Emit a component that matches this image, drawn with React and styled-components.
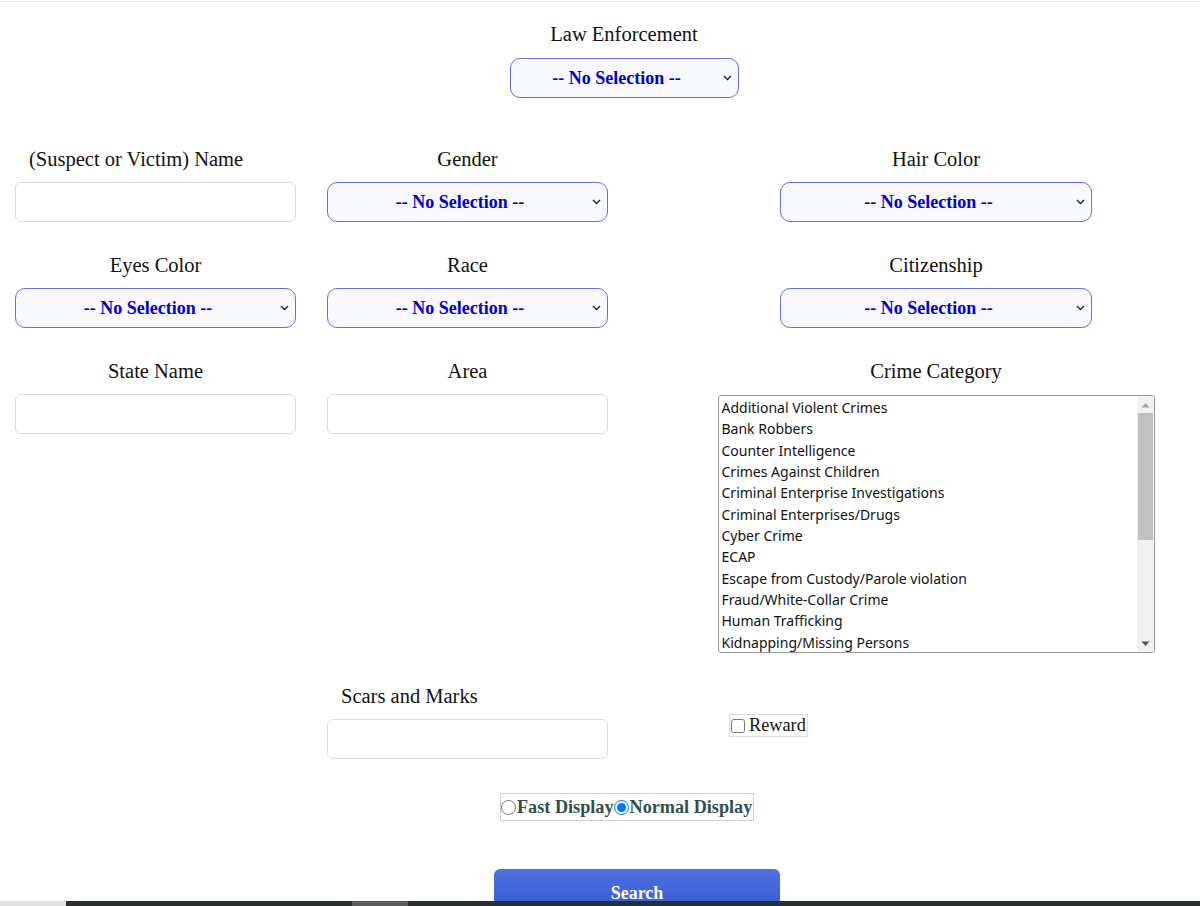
import React from "react";
import styled, { createGlobalStyle } from "styled-components";

const Global = createGlobalStyle`
  html, body { margin: 0; padding: 0; background: #fff; overflow: hidden; }
  body { font-family: "Liberation Serif", "Times New Roman", serif; }
`;

const Page = styled.div`
  margin-top: 1px;
  border-top: 1px solid #e8e8e8;
  width: 1200px;
  display: flex;
  flex-direction: column;
  & > * { flex-shrink: 0; }
`;

const Header = styled.div`
  display: flex;
  flex-direction: column;
  align-items: center;
  padding-left: 48px;
  padding-top: 21px;
`;

const Label = styled.div`
  font-size: 20.5px;
  line-height: 23px;
  color: #111;
  text-align: ${(p) => (p.$pl ? "left" : "center")};
  padding-left: ${(p) => p.$pl || "0"};
  margin-bottom: ${(p) => p.$mb || "11px"};
  white-space: nowrap;
`;

const SelectWrap = styled.div`
  position: relative;
  width: ${(p) => p.$w || "281px"};
  height: 40px;
`;

const Select = styled.select`
  appearance: none;
  -webkit-appearance: none;
  width: 100%;
  height: 100%;
  border: 1px solid #6c6cdc;
  border-radius: 10px;
  background: #f8f8ff;
  color: #0000cd;
  font-family: "Liberation Serif", "Times New Roman", serif;
  font-weight: bold;
  font-size: 18px;
  text-align: center;
  text-align-last: center;
  padding: 0 23px 0 8px;
  box-sizing: border-box;
  outline: none;
`;

const Chevron = styled.svg`
  position: absolute;
  right: 7px;
  top: 50%;
  margin-top: -3px;
  pointer-events: none;
`;

const Input = styled.input`
  width: 281px;
  height: 40px;
  box-sizing: border-box;
  border: 1px solid #dcdce0;
  border-radius: 6px;
  background: #fff;
  outline: none;
`;

const Grid = styled.div`
  display: grid;
  grid-template-columns: 311px 313px 576px;
  row-gap: 32px;
  margin-top: 50px;
`;

const Cell = styled.div`
  display: flex;
  flex-direction: column;
  align-items: ${(p) => (p.$left ? "stretch" : "center")};
  padding-left: ${(p) => p.$pl || "0"};
  padding-top: ${(p) => p.$pt || "0"};
`;

const ControlBox = styled.div`
  display: flex;
  justify-content: center;
`;

const LeftControl = styled.div`
  padding-left: ${(p) => p.$pl || "0"};
`;

const ListBox = styled.div`
  width: 437px;
  height: 258px;
  box-sizing: border-box;
  border: 1px solid #9a9a9a;
  border-radius: 3px;
  display: flex;
  overflow: hidden;
  background: #fff;
  margin-top: 1px;
`;

const Options = styled.div`
  flex: 1;
  padding: 1px 0 0 3px;
  font-family: "Noto Sans", "Open Sans", sans-serif;
  font-size: 14px;
  color: #111;
`;

const Option = styled.div`
  line-height: 21.35px;
  height: 21.35px;
  white-space: nowrap;
`;

const ScrollTrack = styled.div`
  width: 17px;
  background: #f1f1f1;
  display: flex;
  flex-direction: column;
  align-items: center;
`;

const ScrollArrow = styled.div`
  height: 17px;
  width: 17px;
  display: flex;
  align-items: center;
  justify-content: center;
`;

const Thumb = styled.div`
  width: 15px;
  height: 127px;
  background: #c1c1c1;
`;

const ScrollSpacer = styled.div`
  flex: 1;
`;

const CheckLabel = styled.label`
  display: inline-flex;
  align-items: center;
  border: 1px solid #dcdcdc;
  font-size: 18.3px;
  line-height: 21px;
  color: #111;
  padding-right: 1px;
  align-self: flex-start;
  margin-left: 57px;
`;

const Check = styled.input`
  width: 14px;
  height: 14px;
  margin: 0 4px 0 1px;
`;

const RadioGroup = styled.div`
  align-self: flex-start;
  margin-left: 500px;
  margin-top: 34px;
  display: inline-flex;
  align-items: center;
  border: 1px solid #cfcfcf;
  height: 28px;
  box-sizing: border-box;
  padding-right: 1px;
  font-weight: bold;
  font-size: 18.2px;
  color: #2f4f4f;
`;

const Radio = styled.input`
  width: 15px;
  height: 15px;
  margin: 0 1px 0 0;
`;

const RadioText = styled.span`
  white-space: nowrap;
`;

const SearchButton = styled.button`
  align-self: flex-start;
  margin-left: 494px;
  margin-top: 48px;
  width: 286px;
  height: 48px;
  border: none;
  border-radius: 6px;
  background: linear-gradient(#4d72e2, #3457cf);
  color: #fff;
  font-family: "Liberation Serif", "Times New Roman", serif;
  font-weight: bold;
  font-size: 18px;
  padding: 0;
`;

const BottomBar = styled.div`
  position: fixed;
  left: 0;
  right: 0;
  bottom: 0;
  height: 5px;
  display: flex;
`;

const BarSeg = styled.div`
  width: ${(p) => p.$w};
  flex: ${(p) => (p.$grow ? 1 : "none")};
  background: ${(p) => p.$c};
`;

const crimes = [
  "Additional Violent Crimes",
  "Bank Robbers",
  "Counter Intelligence",
  "Crimes Against Children",
  "Criminal Enterprise Investigations",
  "Criminal Enterprises/Drugs",
  "Cyber Crime",
  "ECAP",
  "Escape from Custody/Parole violation",
  "Fraud/White-Collar Crime",
  "Human Trafficking",
  "Kidnapping/Missing Persons",
];

const NoSel = ({ w }) => (
  <SelectWrap $w={w}>
    <Select defaultValue="">
      <option value="">-- No Selection --</option>
    </Select>
    <Chevron width="9" height="6" viewBox="0 0 9 6">
      <path d="M1 1 L4.5 4.5 L8 1" fill="none" stroke="#222255" strokeWidth="1.4" />
    </Chevron>
  </SelectWrap>
);

export default function App() {
  return (
    <>
      <Global />
      <Page>
        <Header>
          <Label $mb="12px">Law Enforcement</Label>
          <NoSel w="229px" />
        </Header>
        <Grid>
          <Cell $left>
            <Label $pl="29px">(Suspect or Victim) Name</Label>
            <ControlBox>
              <Input />
            </ControlBox>
          </Cell>
          <Cell>
            <Label>Gender</Label>
            <NoSel />
          </Cell>
          <Cell $pl="48px">
            <Label>Hair Color</Label>
            <NoSel w="312px" />
          </Cell>

          <Cell>
            <Label>Eyes Color</Label>
            <NoSel />
          </Cell>
          <Cell>
            <Label>Race</Label>
            <NoSel />
          </Cell>
          <Cell $pl="48px">
            <Label>Citizenship</Label>
            <NoSel w="312px" />
          </Cell>

          <Cell>
            <Label>State Name</Label>
            <Input />
          </Cell>
          <Cell>
            <Label>Area</Label>
            <Input />
          </Cell>
          <Cell $pl="48px">
            <Label>Crime Category</Label>
            <ListBox>
              <Options>
                {crimes.map((c) => (
                  <Option key={c}>{c}</Option>
                ))}
              </Options>
              <ScrollTrack>
                <ScrollArrow>
                  <svg width="9" height="6" viewBox="0 0 9 6">
                    <path d="M0.5 5.5 L4.5 1 L8.5 5.5 Z" fill="#a3a3a3" />
                  </svg>
                </ScrollArrow>
                <Thumb />
                <ScrollSpacer />
                <ScrollArrow>
                  <svg width="9" height="6" viewBox="0 0 9 6">
                    <path d="M0.5 0.5 L4.5 5 L8.5 0.5 Z" fill="#505050" />
                  </svg>
                </ScrollArrow>
              </ScrollTrack>
            </ListBox>
          </Cell>

          <Cell />
          <Cell $left>
            <Label $pl="30px">Scars and Marks</Label>
            <LeftControl $pl="16px">
              <Input />
            </LeftControl>
          </Cell>
          <Cell $left $pl="48px" $pt="29px">
            <CheckLabel>
              <Check type="checkbox" />
              Reward
            </CheckLabel>
          </Cell>
        </Grid>
        <RadioGroup>
          <Radio type="radio" name="disp" />
          <RadioText>Fast Display</RadioText>
          <Radio type="radio" name="disp" defaultChecked />
          <RadioText>Normal Display</RadioText>
        </RadioGroup>
        <SearchButton>Search</SearchButton>
      </Page>
      <BottomBar>
        <BarSeg $w="66px" $c="#e2e2e2" />
        <BarSeg $w="286px" $c="#263034" />
        <BarSeg $w="56px" $c="#575f63" />
        <BarSeg $grow $c="#263034" />
      </BottomBar>
    </>
  );
}
